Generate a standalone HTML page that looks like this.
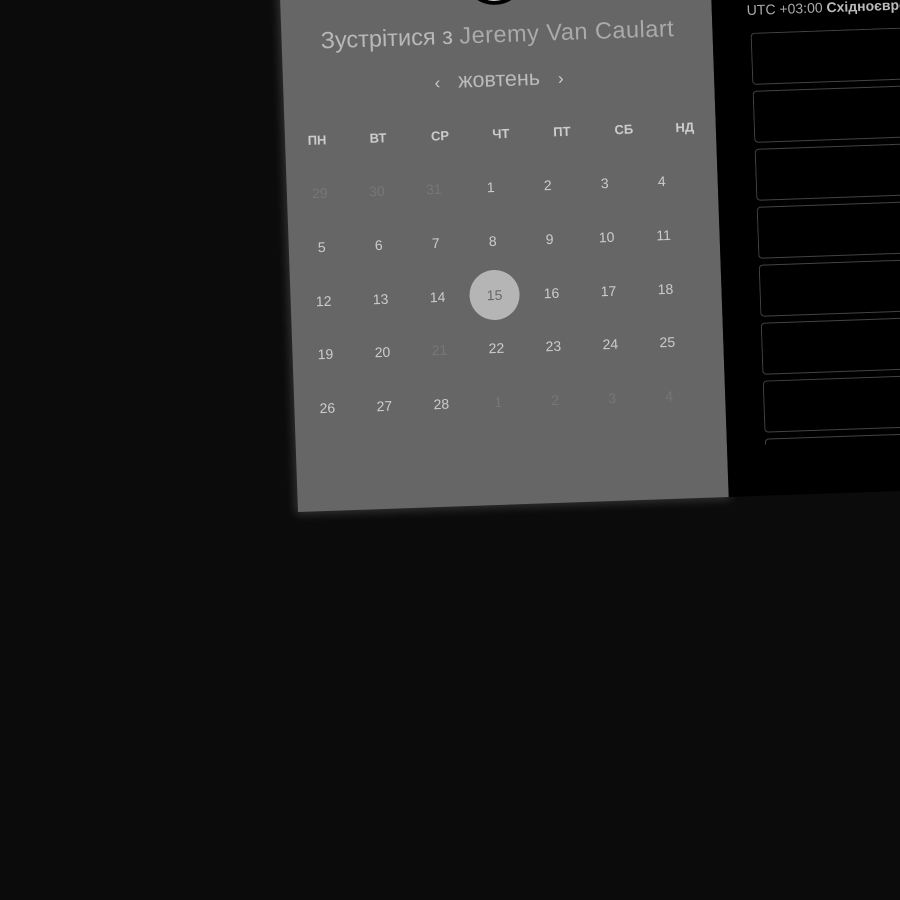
<!DOCTYPE html>
<html><head><meta charset="utf-8"><style>
html,body{margin:0;padding:0;background:#0b0b0b;width:900px;height:900px;overflow:hidden;font-family:"Liberation Sans","DejaVu Sans",sans-serif;}
#rot{position:absolute;left:298px;top:-48px;width:900px;height:560px;transform-origin:0 100%;transform:rotate(-2deg);}
#gray{position:absolute;left:0;top:0;width:431px;height:560px;background:#666;box-shadow:0 0 10px 2px rgba(255,255,255,0.18);}
#black{position:absolute;left:431px;top:0;width:500px;height:560px;background:#000;}
.c{position:absolute;transform:translate(-50%,-50%);white-space:nowrap;}
#title{left:216px;top:90px;font-size:23.5px;color:#b8b8b8;}
#title span{color:#aaa;letter-spacing:0.5px}
#month{left:216px;top:135px;font-size:21.5px;color:#bbb;}
.arr{font-size:17px;color:#ccc;}
.wd{top:189px;font-size:13px;font-weight:bold;color:#ccc;}
.d{font-size:14px;color:#ccc;}
.f{color:#777;}
#sel{left:204px;top:350px;width:50px;height:50px;border-radius:50%;background:#b5b5b5;transform:translate(-50%,-50%);position:absolute;}
#av{position:absolute;left:183px;top:-4px;width:56px;height:56px;border-radius:50%;background:#eee;border:4px solid #000;}
#utc{position:absolute;left:35px;top:66px;font-size:14px;color:#aaa;white-space:nowrap;}
#utc b{color:#bbb}
#list{position:absolute;left:38px;top:97px;width:400px;height:412px;overflow:hidden;}
.slot{height:50px;border:1px solid #444;border-radius:4px;margin-bottom:6px;}
</style></head><body>
<div id="rot">
 <div id="gray">
  <div id="av"></div>
  <div class="c" id="title">Зустрітися з <span>Jeremy Van Caulart</span></div>
  <div class="c" id="month"><span class="arr">‹</span>&nbsp;&nbsp;&nbsp;жовтень&nbsp;&nbsp;&nbsp;<span class="arr">›</span></div>
  <div class="c wd" style="left:32px">ПН</div>
  <div class="c wd" style="left:93px">ВТ</div>
  <div class="c wd" style="left:155px">СР</div>
  <div class="c wd" style="left:216px">ЧТ</div>
  <div class="c wd" style="left:277px">ПТ</div>
  <div class="c wd" style="left:339px">СБ</div>
  <div class="c wd" style="left:400px">НД</div>
  <div id="sel"></div>
  <div id="days"></div>
 </div>
 <div id="black">
  <div id="utc">UTC +03:00 <b>Східноєвропейський час</b></div>
  <div id="list">
   <div class="slot"></div><div class="slot"></div><div class="slot"></div><div class="slot"></div>
   <div class="slot"></div><div class="slot"></div><div class="slot"></div><div class="slot"></div>
  </div>
 </div>
</div>
<script>
var rows=[["29f","30f","31f","1","2","3","4"],["5","6","7","8","9","10","11"],["12","13","14","15","16","17","18"],["19","20","21f","22","23","24","25"],["26","27","28","1f","2f","3f","4f"]];
var h="";
for(var r=0;r<5;r++)for(var c=0;c<7;c++){var t=rows[r][c];var f=t.indexOf("f")>=0;t=t.replace("f","");
var col=(r==2&&c==3)?"color:#666;":"";
h+='<div class="c d'+(f?' f':'')+'" style="left:'+(33+57*c)+'px;top:'+(242+53.75*r)+'px;'+col+'">'+t+'</div>';}
document.getElementById("days").innerHTML=h;
</script>
</body></html>
